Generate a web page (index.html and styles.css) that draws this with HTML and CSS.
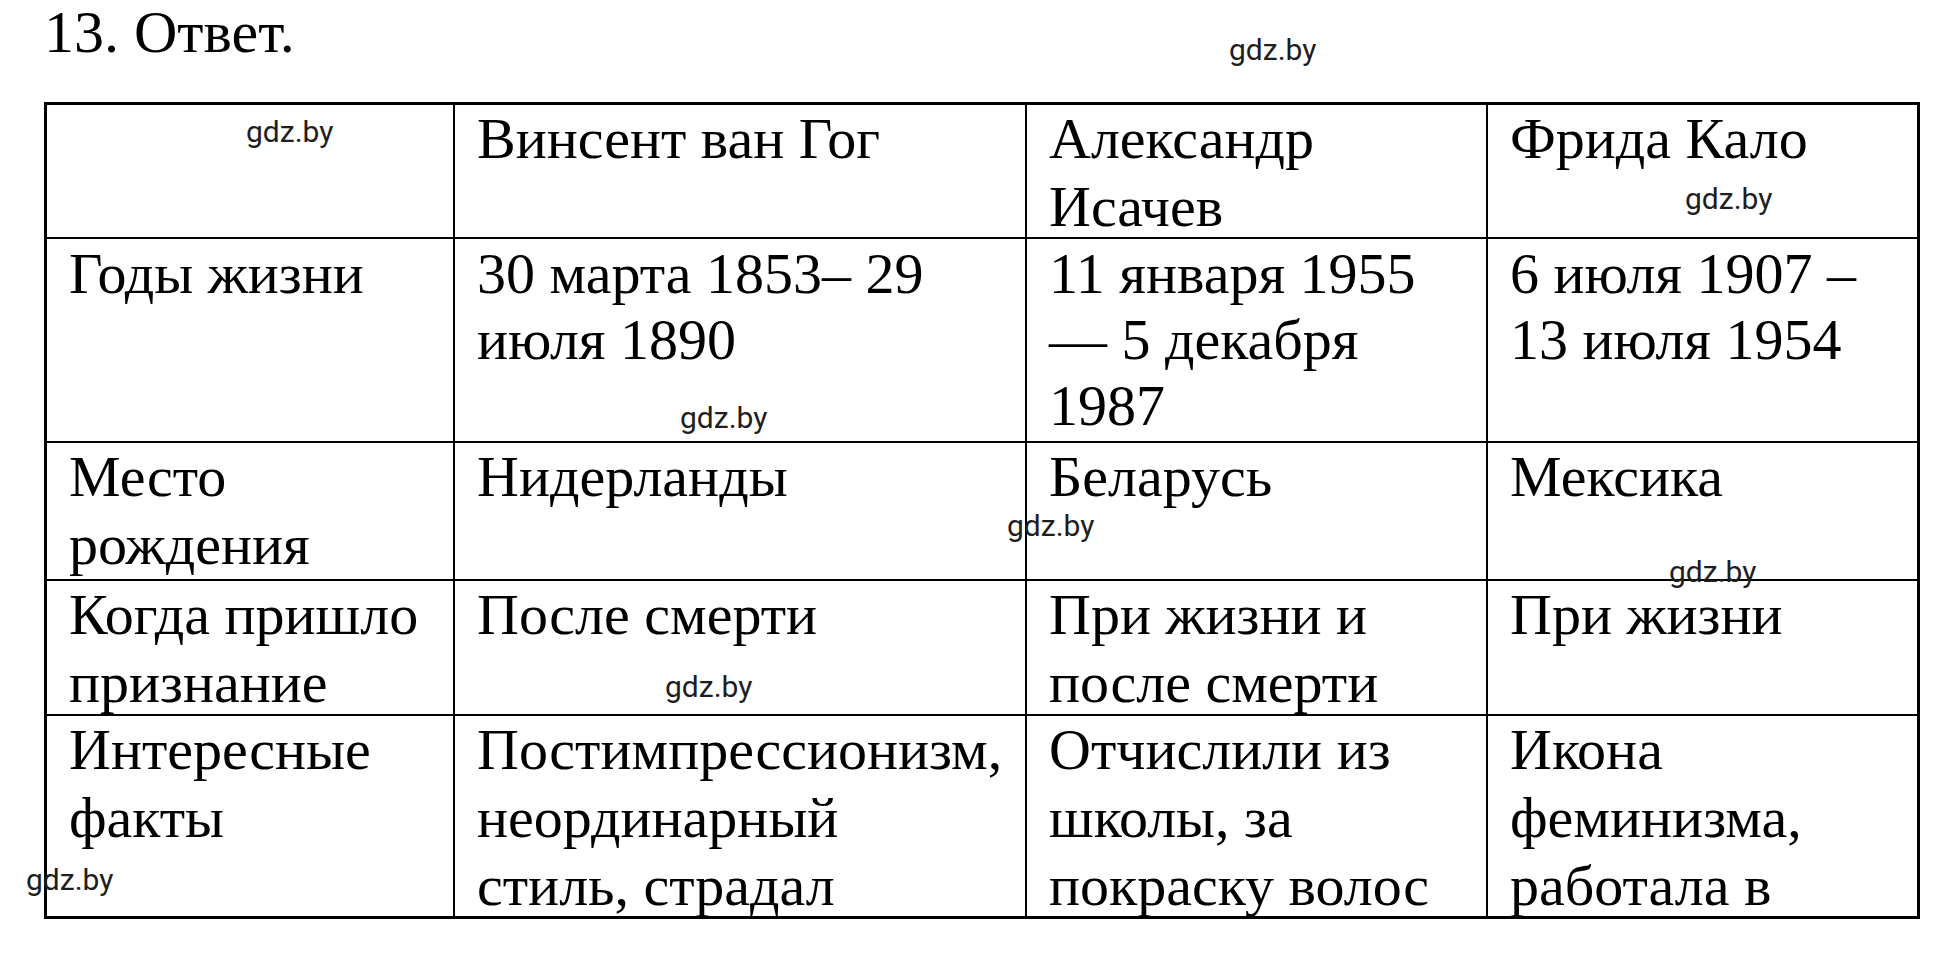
FILE: index.html
```html
<!DOCTYPE html>
<html lang="ru">
<head>
<meta charset="utf-8">
<title>13. Ответ.</title>
<link rel="stylesheet" href="styles.css">
</head>
<body>
<div class="page">
  <h1 class="title">13. Ответ.</h1>
  <div class="grid">
    <div class="cell"></div>
    <div class="cell">Винсент ван Гог</div>
    <div class="cell">Александр<br>Исачев</div>
    <div class="cell">Фрида Кало</div>

    <div class="cell r2">Годы жизни</div>
    <div class="cell r2">30 марта 1853– 29<br>июля 1890</div>
    <div class="cell r2">11 января 1955<br>— 5 декабря<br>1987</div>
    <div class="cell r2">6 июля 1907 –<br>13 июля 1954</div>

    <div class="cell">Место<br>рождения</div>
    <div class="cell">Нидерланды</div>
    <div class="cell">Беларусь</div>
    <div class="cell">Мексика</div>

    <div class="cell">Когда пришло<br>признание</div>
    <div class="cell">После смерти</div>
    <div class="cell">При жизни и<br>после смерти</div>
    <div class="cell">При жизни</div>

    <div class="cell">Интересные<br>факты</div>
    <div class="cell">Постимпрессионизм,<br>неординарный<br>стиль, страдал</div>
    <div class="cell">Отчислили из<br>школы, за<br>покраску волос</div>
    <div class="cell">Икона<br>феминизма,<br>работала в</div>
  </div>

  <span class="wm wm1">gdz.by</span>
  <span class="wm wm2">gdz.by</span>
  <span class="wm wm3">gdz.by</span>
  <span class="wm wm4">gdz.by</span>
  <span class="wm wm5">gdz.by</span>
  <span class="wm wm6">gdz.by</span>
  <span class="wm wm7">gdz.by</span>
  <span class="wm wm8">gdz.by</span>
</div>
</body>
</html>
```

FILE: styles.css
```css
html, body {
  margin: 0;
  padding: 0;
  background: #ffffff;
}

.page {
  position: relative;
  width: 1954px;
  height: 956px;
  overflow: hidden;
  font-family: "Liberation Serif", "Times New Roman", serif;
  color: #000;
}

.title {
  margin: 0 0 38px 44px;
  padding: 0;
  font-weight: normal;
  font-size: 60px;
  line-height: 64px;
  height: 64px;
}

.grid {
  margin-left: 44px;
  width: max-content;
  display: grid;
  grid-template-columns: 406px 570px 459px 429px;
  grid-template-rows: 132px 202px 136px 133px 200px;
  gap: 2px;
  background: #000;
  border: 3px solid #000;
}

.cell {
  background: #fff;
  padding: 0 0 0 22px;
  font-size: 58px;
  line-height: 68px;
  white-space: nowrap;
}

.cell.r2 {
  padding-top: 2px;
  line-height: 66px;
}

.wm {
  position: absolute;
  font-family: Roboto, "Liberation Sans", sans-serif;
  font-size: 30px;
  line-height: 34px;
  color: #1e1e1e;
  white-space: nowrap;
}

.wm1 { left: 1229px; top: 33px; }
.wm2 { left: 246px; top: 115px; }
.wm3 { left: 1685px; top: 182px; }
.wm4 { left: 680px; top: 401px; }
.wm5 { left: 1007px; top: 509px; }
.wm6 { left: 1669px; top: 555px; }
.wm7 { left: 665px; top: 670px; }
.wm8 { left: 26px; top: 863px; }
```
